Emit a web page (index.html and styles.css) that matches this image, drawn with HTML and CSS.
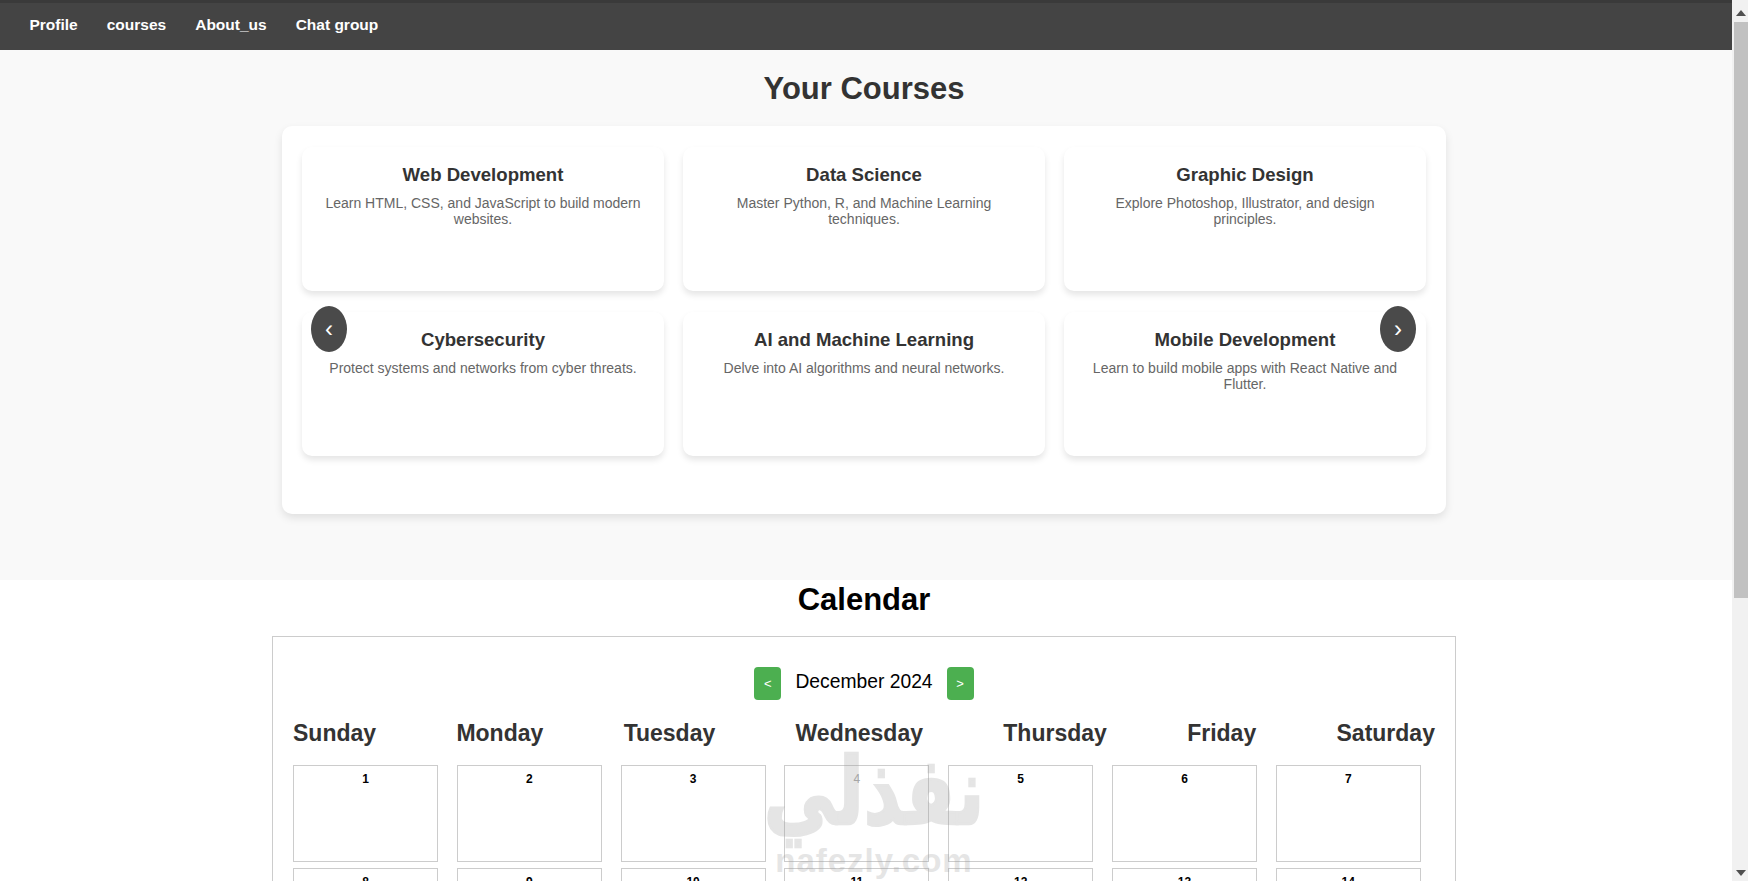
FILE: index.html
```html
<!DOCTYPE html>
<html lang="en">
<head>
    <meta charset="UTF-8">
    <title>Your Courses</title>
    <link rel="stylesheet" href="styles.css">
</head>
<body>
<div class="window">
    <div class="page">
        <nav class="navbar">
            <a href="#">Profile</a>
            <a href="#">courses</a>
            <a href="#">About_us</a>
            <a href="#">Chat group</a>
        </nav>

        <section class="courses">
            <h1>Your Courses</h1>
            <div class="slider">
                <button class="slide-btn slide-prev">&#8249;</button>
                <button class="slide-btn slide-next">&#8250;</button>
                <div class="course-grid">
                    <div class="course-card">
                        <h3>Web Development</h3>
                        <p>Learn HTML, CSS, and JavaScript to build modern websites.</p>
                    </div>
                    <div class="course-card">
                        <h3>Data Science</h3>
                        <p>Master Python, R, and Machine Learning techniques.</p>
                    </div>
                    <div class="course-card">
                        <h3>Graphic Design</h3>
                        <p>Explore Photoshop, Illustrator, and design principles.</p>
                    </div>
                    <div class="course-card">
                        <h3>Cybersecurity</h3>
                        <p>Protect systems and networks from cyber threats.</p>
                    </div>
                    <div class="course-card">
                        <h3>AI and Machine Learning</h3>
                        <p>Delve into AI algorithms and neural networks.</p>
                    </div>
                    <div class="course-card">
                        <h3>Mobile Development</h3>
                        <p>Learn to build mobile apps with React Native and Flutter.</p>
                    </div>
                </div>
            </div>
        </section>

        <section class="calendar-section">
            <h2>Calendar</h2>
            <div class="calendar">
                <div class="calendar-head">
                    <button class="month-btn">&lt;</button>
                    <span class="month-name">December 2024</span>
                    <button class="month-btn">&gt;</button>
                </div>
                <div class="weekdays">
                    <span>Sunday</span>
                    <span>Monday</span>
                    <span>Tuesday</span>
                    <span>Wednesday</span>
                    <span>Thursday</span>
                    <span>Friday</span>
                    <span>Saturday</span>
                </div>
                <div class="days">
                    <div class="day">1</div>
                    <div class="day">2</div>
                    <div class="day">3</div>
                    <div class="day day-faded">4</div>
                    <div class="day">5</div>
                    <div class="day">6</div>
                    <div class="day">7</div>
                    <div class="day">8</div>
                    <div class="day">9</div>
                    <div class="day">10</div>
                    <div class="day">11</div>
                    <div class="day">12</div>
                    <div class="day">13</div>
                    <div class="day">14</div>
                </div>
            </div>
        </section>

        <div class="watermark">
            <span class="watermark-ar" lang="ar" dir="rtl">نفذلي</span>
            <span class="watermark-en">nafezly.com</span>
        </div>
    </div>

    <div class="scrollbar">
        <span class="scroll-arrow scroll-up"></span>
        <span class="scroll-thumb"></span>
        <span class="scroll-track"></span>
        <span class="scroll-arrow scroll-down"></span>
    </div>
</div>
</body>
</html>
```
FILE: styles.css
```css
* {
    box-sizing: border-box;
}

html, body {
    margin: 0;
    height: 881px;
    overflow: hidden;
}

body {
    font-family: "Liberation Sans", Arial, sans-serif;
    background: #fff;
    color: #333;
}

.window {
    display: flex;
    height: 881px;
}

.page {
    position: relative;
    flex: 1;
    min-width: 0;
    overflow: hidden;
}

/* Navbar */
.navbar {
    display: flex;
    align-items: center;
    height: 50px;
    padding: 0 15px 3px;
    background: #444;
    border-top: 3px solid #3a3a3a;
}

.navbar a {
    padding: 0 14.5px;
    color: #fff;
    font-size: 15.5px;
    font-weight: bold;
    text-decoration: none;
}

/* Courses */
.courses {
    height: 530px;
    padding: 20px 4px 0 0;
    background: #f9f9f9;
}

.courses h1 {
    margin: 0 0 19px;
    font-size: 31px;
    line-height: 37px;
    text-align: center;
    color: #333;
}

.slider {
    position: relative;
    width: 1164px;
    height: 388px;
    margin: 0 auto;
    padding: 21px 20px 0;
    background: #fff;
    border-radius: 10px;
    box-shadow: 0 4px 8px rgba(0, 0, 0, 0.1);
}

.course-grid {
    display: grid;
    grid-template-columns: repeat(3, 1fr);
    gap: 21px 19px;
}

.course-card {
    height: 144px;
    padding: 17px 20px;
    text-align: center;
    background: #fff;
    border-radius: 10px;
    box-shadow: 0 4px 6px rgba(0, 0, 0, 0.1);
}

.course-card h3 {
    margin: 0 0 10px;
    font-size: 18.6px;
    line-height: 22px;
    color: #333;
}

.course-card p {
    margin: 0;
    font-size: 14px;
    line-height: 15.5px;
    color: #666;
}

.slide-btn {
    position: absolute;
    top: 180px;
    z-index: 2;
    width: 36px;
    height: 46px;
    padding: 0;
    border: none;
    border-radius: 50%;
    background: #4a4a4a;
    color: #fff;
    font-family: inherit;
    font-size: 24px;
}

.slide-prev {
    left: 29px;
}

.slide-next {
    right: 30px;
}

/* Calendar */
.calendar-section {
    padding: 1px 4px 0 0;
    background: #fff;
}

.calendar-section h2 {
    margin: 0 0 18px;
    font-size: 31px;
    line-height: 37px;
    text-align: center;
    color: #000;
}

.calendar {
    width: 1184px;
    height: 400px;
    margin: 0 auto;
    padding: 29px 20px 0;
    border: 1px solid #ccc;
}

.calendar-head {
    display: flex;
    justify-content: center;
    align-items: center;
    gap: 14px;
    height: 35px;
}

.month-btn {
    width: 27px;
    height: 33px;
    padding: 0;
    border: none;
    border-radius: 4px;
    background: #4caf50;
    color: #fff;
    font-family: inherit;
    font-size: 13px;
}

.month-name {
    padding-bottom: 4px;
    font-size: 19.3px;
    color: #000;
}

.weekdays {
    display: flex;
    justify-content: space-between;
    align-items: center;
    height: 28px;
    margin-top: 18px;
    font-size: 23px;
    font-weight: bold;
    color: #333;
}

.days {
    display: grid;
    grid-template-columns: repeat(7, 145px);
    grid-auto-rows: 97px;
    gap: 6px 18.8px;
    margin-top: 18px;
}

.day {
    padding-top: 6px;
    border: 1px solid #ccc;
    font-size: 12px;
    line-height: 14px;
    font-weight: bold;
    text-align: center;
    color: #000;
}

.day-faded {
    color: #aaa;
    font-weight: normal;
}

/* Watermark */
.watermark {
    position: absolute;
    left: 769px;
    top: 756px;
    width: 210px;
    display: flex;
    flex-direction: column;
    align-items: center;
    color: #999;
    opacity: 0.25;
    font-weight: bold;
    pointer-events: none;
}

.watermark-ar {
    font-family: "DejaVu Sans", sans-serif;
    font-size: 72px;
    line-height: 82px;
    -webkit-text-stroke: 2px #999;
    transform: scaleY(1.3);
    transform-origin: 50% 72%;
}

.watermark-en {
    margin-top: 6px;
    font-size: 33px;
    line-height: 34px;
    letter-spacing: 1px;
}

/* Scrollbar */
.scrollbar {
    display: flex;
    flex-direction: column;
    width: 16px;
    background: #f1f1f1;
}

.scroll-arrow {
    position: relative;
    height: 22px;
}

.scroll-arrow::after {
    content: "";
    position: absolute;
    left: 4px;
    border-left: 5px solid transparent;
    border-right: 5px solid transparent;
}

.scroll-up::after {
    top: 10px;
    border-bottom: 6px solid #505050;
}

.scroll-down::after {
    bottom: 5px;
    border-top: 6px solid #505050;
}

.scroll-thumb {
    height: 576px;
    margin-left: 2px;
    background: #c1c1c1;
}

.scroll-track {
    flex: 1;
}
```
